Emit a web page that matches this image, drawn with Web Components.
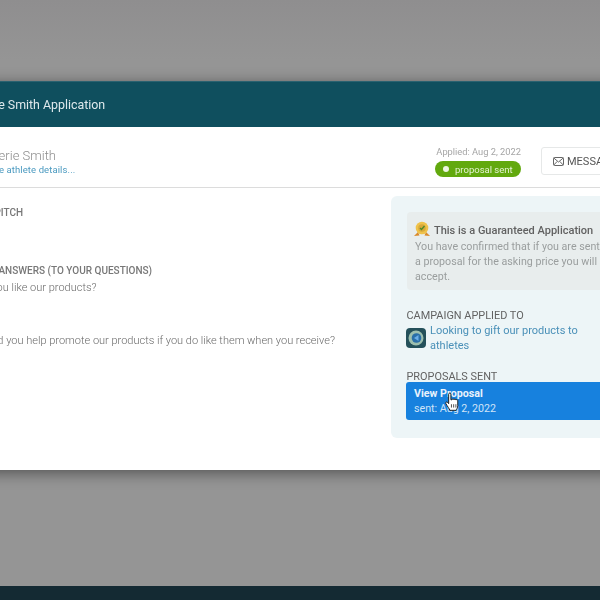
<!DOCTYPE html>
<html><head><meta charset="utf-8"><style>
html,body{margin:0;padding:0;height:600px;overflow:hidden;background:#949494}
body{font-family:Roboto,"Liberation Sans",sans-serif}
</style></head><body>
<app-page>
<app-modal heading="Valerie Smith Application">
  <app-athlete slot="top" name="Valerie Smith" link="See athlete details..." applied="Applied: Aug 2, 2022" status="proposal sent"></app-athlete>
  <app-answers slot="main"></app-answers>
  <app-side slot="side"></app-side>
</app-modal>
</app-page>
<script>
function def(name,css,html,init){
  customElements.define(name,class extends HTMLElement{
    connectedCallback(){
      if(this.shadowRoot)return;
      const r=this.attachShadow({mode:'open'});
      r.innerHTML='<style>'+css+'</style>'+(typeof html==='function'?html(this):html);
    }
  });
}
const a=(el,k)=>el.getAttribute(k)||'';
def('app-page',`
:host{display:flex;flex-direction:column;height:600px;overflow:hidden;background:linear-gradient(#8f8e8f,#959595 60px)}
.top{flex:0 0 81px}
.mid{flex:1;min-height:0}
.foot{flex:0 0 14px;background:#142a33}
`,`<div class="top"></div><div class="mid"><slot></slot></div><div class="foot"></div>`);
def('app-modal',`
:host{display:block;width:700px;margin-left:-67px;background:#fff;box-shadow:0 3px 14px rgba(0,0,0,.45);filter:blur(.45px)}
header{height:46px;background:#0f4f5e;color:#dfe9ec;font-size:12.4px;display:flex;align-items:center;padding-left:34px;border-top:1px solid #2a6270;box-sizing:border-box}
.cols{display:grid;grid-template-columns:458px 1fr;height:282px}
.left{padding:19px 0 0 40px}
.right{padding:8px 0 0 0}
`,h=>`<header>${a(h,'heading')}</header><slot name="top"></slot><div class="cols"><div class="left"><slot name="main"></slot></div><div class="right"><slot name="side"></slot></div></div>`);
def('app-athlete',`
:host{display:flex;height:61px;box-sizing:border-box;border-bottom:1px solid #dcdcdc;padding-left:48px;position:relative}
.who{flex:0 0 auto;padding-top:21px;width:434px}
.name{font-size:13px;line-height:15px;color:#8d8d8d;font-weight:300}
.link{font-size:9.5px;line-height:13px;color:#4b9ac0;letter-spacing:.1px;margin-left:7px}
.status{flex:0 0 auto;width:106px;padding-top:19px;display:flex;flex-direction:column;align-items:flex-end}
.applied{font-size:9.3px;line-height:11px;color:#a5a5a5}
.pill{margin-top:4px;height:16px;width:86px;background:#62a90e;border-radius:8px;color:#e6f3d4;font-size:9.5px;display:flex;align-items:center;box-sizing:border-box;padding-left:8px;gap:6px;white-space:nowrap}
.dot{width:6px;height:6px;border-radius:50%;background:#eef6e2;flex:none}
.btn{margin:20px 0 0 20px;height:28px;width:110px;flex:none;border:1px solid #e6e8e8;border-radius:3px;box-sizing:border-box;font-size:11px;color:#555;display:flex;align-items:center;padding-left:11px;gap:3px}
svg{display:block}
`,h=>`<div class="who"><div class="name">${a(h,'name')}</div><div class="link">${a(h,'link')}</div></div>
<div class="status"><div class="applied">${a(h,'applied')}</div><div class="pill"><span class="dot"></span>${a(h,'status')}</div></div>
<div class="btn"><svg width="11" height="9" viewBox="0 0 11 9" fill="none" stroke="#666" stroke-width="1"><rect x=".5" y=".5" width="10" height="8" rx="1"/><path d="M.8 1l4.700 4 4.700-4M.8 8l3.400-3.600M10.200 8 6.800 4.400"/></svg>MESSAGE</div>`);
def('app-answers',`
:host{display:block;color:#7c7c7c}
.h{font-size:10px;line-height:12px;color:#777;font-weight:500;white-space:nowrap;margin-left:-5px}
.q{font-size:11px;line-height:14px;font-weight:300;color:#6a6a6a;white-space:nowrap}
.pitch{height:58px;margin-left:-9px}
.q1{margin-top:4px;height:53px}
`,`<div class="h pitch">THEIR PITCH</div><div class="h">THEIR ANSWERS (TO YOUR QUESTIONS)</div><div class="q q1">Did you like our products?</div><div class="q">Would you help promote our products if you do like them when you receive?</div>`);
def('app-side',`
:host{display:block;height:242px;background:#edf5f7;border-radius:6px 0 0 6px;padding:16px 0 0 16px;box-sizing:border-box;color:#666}
.g{background:#e8eded;border-radius:4px;height:78px;padding:8px 0 0 8px;box-sizing:border-box;width:220px}
.t{display:flex;align-items:center;gap:4px;font-size:11px;font-weight:500;color:#616161;height:20px;white-space:nowrap;margin-left:-1px}
.t svg{margin-top:-2px}
.d{font-size:10.7px;line-height:15px;color:#9a9e9e;margin-top:-1px;width:190px}
.lab{font-size:10.9px;line-height:13px;color:#626262;margin-left:-.5px}
.c1{margin-top:19px}
.camp{display:flex;gap:4px;margin-top:1px;margin-left:-1px}
.ico{flex:none;margin-top:5px;display:block}
.ctext{font-size:11px;line-height:15px;color:#4a90b8;width:165px}
.c2{margin-top:17px}
.pv{margin:-1px 0 0 -1px;background:#1781de;border-radius:3px 0 0 3px;height:38px;width:221px;padding:5px 0 0 8px;box-sizing:border-box;position:relative;color:#cfe4f8;font-size:10.7px;line-height:14.5px}
.pv b{display:block;font-weight:700;color:#e8f2fc}
.hand{position:absolute;left:38px;top:10px}
`,`<div class="g"><div class="t"><svg width="16" height="17" viewBox="0 0 16 17"><path d="M0 15l4-4 1.500 3.500zM16 15l-4-4-1.500 3.500z" fill="#d98a2b"/><circle cx="8" cy="7" r="6.300" fill="#efc24a"/><circle cx="8" cy="7" r="3.800" fill="#d8a93a"/><path d="M6 7l1.500 1.500L10.500 5" fill="none" stroke="#4d8a2a" stroke-width="1.400"/></svg>This is a Guaranteed Application</div>
<div class="d">You have confirmed that if you are sent a proposal for the asking price you will accept.</div></div>
<div class="lab c1">CAMPAIGN APPLIED TO</div>
<div class="camp"><svg class="ico" width="20" height="20" viewBox="0 0 20 20"><rect width="20" height="20" rx="4" fill="#24505a"/><circle cx="10" cy="10" r="7.500" fill="#9dbfae"/><circle cx="10.500" cy="10" r="4.800" fill="#2a6fa8"/><path d="M8 10l4.500-3v6z" fill="#6aaee8"/></svg><div class="ctext">Looking to gift our products to athletes</div></div>
<div class="lab c2">PROPOSALS SENT</div>
<div class="pv"><b>View Proposal</b>sent: Aug 2, 2022
<svg class="hand" width="16" height="20" viewBox="0 0 14 18"><path d="M4 2c0-1.400 2-1.400 2 0v5l1 0c0-1 1.800-1 1.800 0 0-.8 1.700-.8 1.700.2.2-.6 1.700-.4 1.700.6v4.500c0 2-1 3-1.600 4.200H5.200C4.500 15 3 13 1.500 10.500c-.7-1.200.6-2 1.400-1.200L4 10.500z" fill="#fff" stroke="#222" stroke-width=".9" stroke-linejoin="round"/><path d="M6.500 11v3M8.500 11v3M10.500 11v3" stroke="#222" stroke-width=".7"/></svg></div>`);
</script>
</body></html>
